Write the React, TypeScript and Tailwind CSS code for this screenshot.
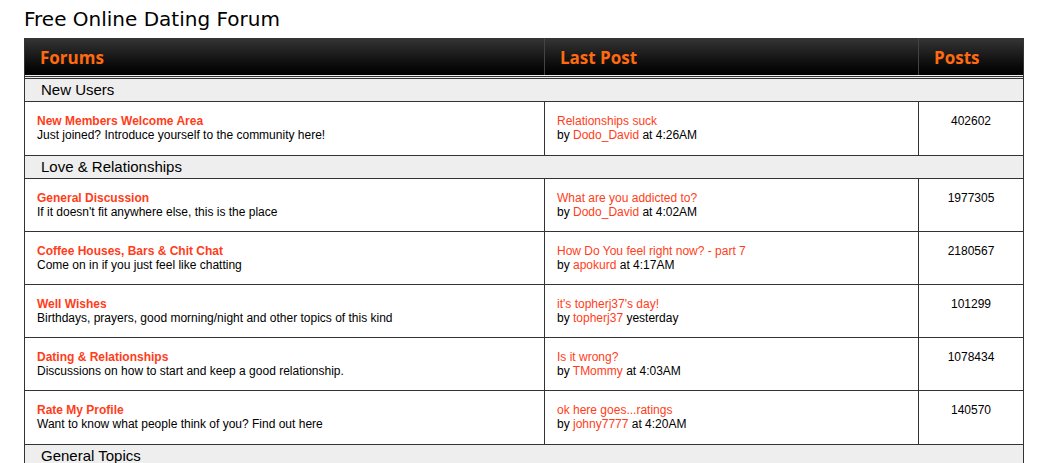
import React from "react";

type Forum = { title: string; desc: string; post: string; user: string; when: string; count: string };

const sections: { name: string; forums: Forum[] }[] = [
  {
    name: "New Users",
    forums: [
      { title: "New Members Welcome Area", desc: "Just joined? Introduce yourself to the community here!", post: "Relationships suck", user: "Dodo_David", when: "at 4:26AM", count: "402602" },
    ],
  },
  {
    name: "Love & Relationships",
    forums: [
      { title: "General Discussion", desc: "If it doesn't fit anywhere else, this is the place", post: "What are you addicted to?", user: "Dodo_David", when: "at 4:02AM", count: "1977305" },
      { title: "Coffee Houses, Bars & Chit Chat", desc: "Come on in if you just feel like chatting", post: "How Do You feel right now? - part 7", user: "apokurd", when: "at 4:17AM", count: "2180567" },
      { title: "Well Wishes", desc: "Birthdays, prayers, good morning/night and other topics of this kind", post: "it's topherj37's day!", user: "topherj37", when: "yesterday", count: "101299" },
      { title: "Dating & Relationships", desc: "Discussions on how to start and keep a good relationship.", post: "Is it wrong?", user: "TMommy", when: "at 4:03AM", count: "1078434" },
      { title: "Rate My Profile", desc: "Want to know what people think of you? Find out here", post: "ok here goes...ratings", user: "johny7777", when: "at 4:20AM", count: "140570" },
    ],
  },
  { name: "General Topics", forums: [] },
];

export default function App() {
  return (
    <div className="w-[1045px] h-[463px] overflow-hidden bg-white" style={{ fontFamily: '"Liberation Sans", Arial, sans-serif' }}>
      <div className="pl-[24px] pt-[5px] h-[38px] text-[20px] leading-[28px] text-black" style={{ fontFamily: '"DejaVu Sans", sans-serif' }}>
        Free Online Dating Forum
      </div>
      <div className="ml-[24px] w-[1000px] border-x border-[#333]">
        <div className="flex h-[40px] bg-gradient-to-b from-[#363636] to-[#020202] border-b-[3px] border-double border-b-[#eee]" style={{ fontFamily: '"Open Sans", sans-serif' }}>
          <div className="w-[520px] pl-[15px] pt-[8px] text-[17px] leading-[24px] font-bold text-[#ff6a10] border-r border-[#444]">Forums</div>
          <div className="w-[374px] pl-[15px] pt-[8px] text-[17px] leading-[24px] font-bold text-[#ff6a10] border-r border-[#444]">Last Post</div>
          <div className="flex-1 pl-[15px] pt-[8px] text-[17px] leading-[24px] font-bold text-[#ff6a10]">Posts</div>
        </div>
        {sections.map((s) => (
          <div key={s.name}>
            <div className="h-[24px] bg-[#eeeeee] border-y border-[#333] pl-[16px] text-[15px] leading-[22px] text-black">{s.name}</div>
            {s.forums.map((f, i) => (
              <div key={f.title} className={`flex h-[53px] text-[12px] leading-[14px] ${i < s.forums.length - 1 ? "border-b border-[#333]" : ""}`}>
                <div className="w-[520px] pl-[12px] pt-[12px] border-r border-[#333]">
                  <div className="font-bold text-[#ff3d1a]">{f.title}</div>
                  <div className="text-black">{f.desc}</div>
                </div>
                <div className="w-[374px] pl-[12px] pt-[12px] border-r border-[#333]">
                  <div className="text-[#ff3d1a]">{f.post}</div>
                  <div className="text-black">
                    by <span className="text-[#ff3d1a]">{f.user}</span> {f.when}
                  </div>
                </div>
                <div className="flex-1 pt-[12px] text-center text-black">{f.count}</div>
              </div>
            ))}
          </div>
        ))}
      </div>
    </div>
  );
}
